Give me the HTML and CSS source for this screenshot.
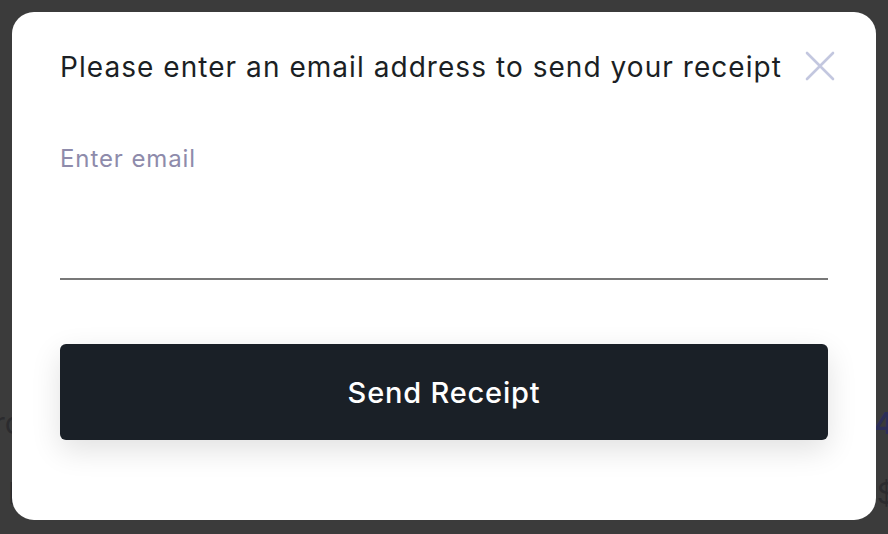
FILE: index.html
```html
<!DOCTYPE html>
<html>
<head>
<meta charset="utf-8">
<link rel="stylesheet" href="styles.css">
</head>
<body>
<div class="page">
  <div class="row row-top"><span class="bg-l">ro</span><span class="bg-r accent">4</span></div>
  <div class="row row-bot"><span class="bg-l">In</span><span class="bg-r">$</span></div>
</div>
<div class="overlay">
  <div class="modal">
    <div class="head">
      <h1 class="title">Please enter an email address to send your receipt</h1>
      <button class="close" aria-label="Close">
        <svg width="32" height="32" viewBox="0 0 32 32"><path d="M3 3 L29 29 M29 3 L3 29" stroke="#c3c7df" stroke-width="2.6" stroke-linecap="round" fill="none"/></svg>
      </button>
    </div>
    <label class="field">
      <span class="placeholder">Enter email</span>
    </label>
    <button class="send">Send Receipt</button>
  </div>
</div>
</body>
</html>
```
FILE: styles.css
```css
* { box-sizing: border-box; }
html, body { margin: 0; padding: 0; }
body {
  width: 888px; height: 534px; overflow: hidden;
  background: #3b3b3b;
  font-family: Inter, "Noto Sans", sans-serif;
  position: relative;
}
.page { padding-top: 405px; }
.row { display: flex; justify-content: space-between; font-size: 30px; color: #2b2b2e; }
.row-top { height: 70px; margin-left: -6px; }
.row-bot { margin-left: 8px; }
.accent { color: #2c2e58; font-weight: 600; margin-right: -6px; }
.row-bot .bg-r { margin-right: -8px; }
.overlay {
  position: absolute; inset: 0;
  padding: 12px;
}
.modal {
  width: 864px; height: 508px;
  background: #fff;
  border-radius: 22px;
  padding: 38px 48px 0 48px;
  display: flex; flex-direction: column;
}
.head { display: flex; justify-content: space-between; align-items: center; }
.title {
  margin: 0; font-weight: 400; font-size: 28px; color: #1b1f24;
  letter-spacing: 1.05px; line-height: 34px;
}
.close {
  border: 0; background: none; padding: 0; margin-right: -8px; margin-top: -2px;
  width: 32px; height: 32px; display: flex;
}
.field {
  margin-top: 60px; height: 136px;
  border-bottom: 2px solid #787878;
  display: block;
}
.placeholder { font-size: 24px; color: #8e8bab; line-height: 30px; display: block; letter-spacing: 0.9px; }
.send {
  margin-top: 64px; height: 96px; width: 100%; flex: none;
  border: 0; border-radius: 6px;
  background: #1a2027; color: #fff;
  font-family: Inter, sans-serif; font-size: 29px; font-weight: 500; letter-spacing: 0.8px;
  box-shadow: 0 10px 30px rgba(0,0,0,0.12);
}
```
